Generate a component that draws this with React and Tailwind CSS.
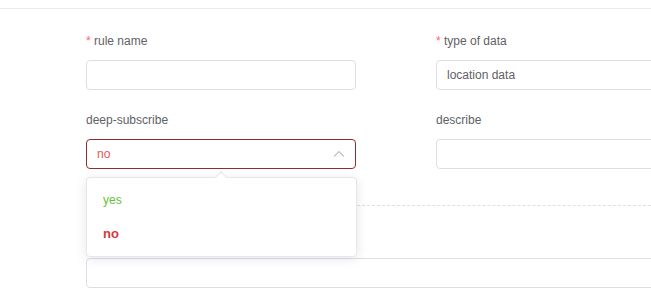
export default function App() {
  return (
    <div className="min-h-screen w-[651px] overflow-hidden bg-white font-['Liberation_Sans',Arial,sans-serif] text-xs text-[#606266]">
      <div className="h-2" />
      <div className="border-t border-[#ebebeb] pl-[86px] pt-[22px]">
        {/* 表单两列 */}
        <div className="grid grid-cols-[270px_270px] gap-x-[80px] gap-y-5">
          <div>
            <label className="block h-5 leading-5">
              <span className="text-[#f56c6c]">*</span> rule name
            </label>
            <input className="mt-[9px] block h-[30px] w-full rounded-[4px] border border-[#dcdfe6] px-[11px] outline-none" />
          </div>
          <div>
            <label className="block h-5 leading-5">
              <span className="text-[#f56c6c]">*</span> type of data
            </label>
            <div className="mt-[9px] flex h-[30px] w-full items-center rounded-[4px] border border-[#dcdfe6] px-[10px] text-[#606266]">
              location data
            </div>
          </div>
          <div>
            <label className="block h-5 leading-5">deep-subscribe</label>
            <div className="relative mt-[9px]">
              <div className="flex h-[30px] w-full items-center justify-between rounded-[4px] border border-[#8e2e2e] pl-[10px] pr-[10px] text-[#e0575b]">
                <span>no</span>
                <svg width="12" height="8" viewBox="0 0 12 8" fill="none" stroke="#c0c4cc" strokeWidth="1.2">
                  <polyline points="1,6.5 6,1.5 11,6.5" />
                </svg>
              </div>
              {/* 下拉菜单 */}
              <div className="absolute left-0 top-full z-10 mt-2 w-[271px] rounded-[4px] border border-[#e4e7ed] bg-white py-[5px] shadow-[0_2px_12px_0_rgba(0,0,0,0.1)]">
                <div className="absolute left-[130px] top-[-5px] h-2 w-2 rotate-45 border-l border-t border-[#e4e7ed] bg-white" />
                <div className="flex h-[34px] items-center px-4 text-[#67c23a]">yes</div>
                <div className="flex h-[34px] items-center px-4 text-[13px] font-bold text-[#d9383a]">no</div>
              </div>
            </div>
          </div>
          <div>
            <label className="block h-5 leading-5">describe</label>
            <input className="mt-[9px] block h-[30px] w-full rounded-[4px] border border-[#dcdfe6] px-[11px] outline-none" />
          </div>
        </div>

        <div className="mt-9 border-t border-dashed border-[#dcdfe6]" />

        <input className="mt-[52px] block h-[30px] w-[620px] rounded-[4px] border border-[#dcdfe6] px-[11px] outline-none" />
      </div>
    </div>
  )
}
